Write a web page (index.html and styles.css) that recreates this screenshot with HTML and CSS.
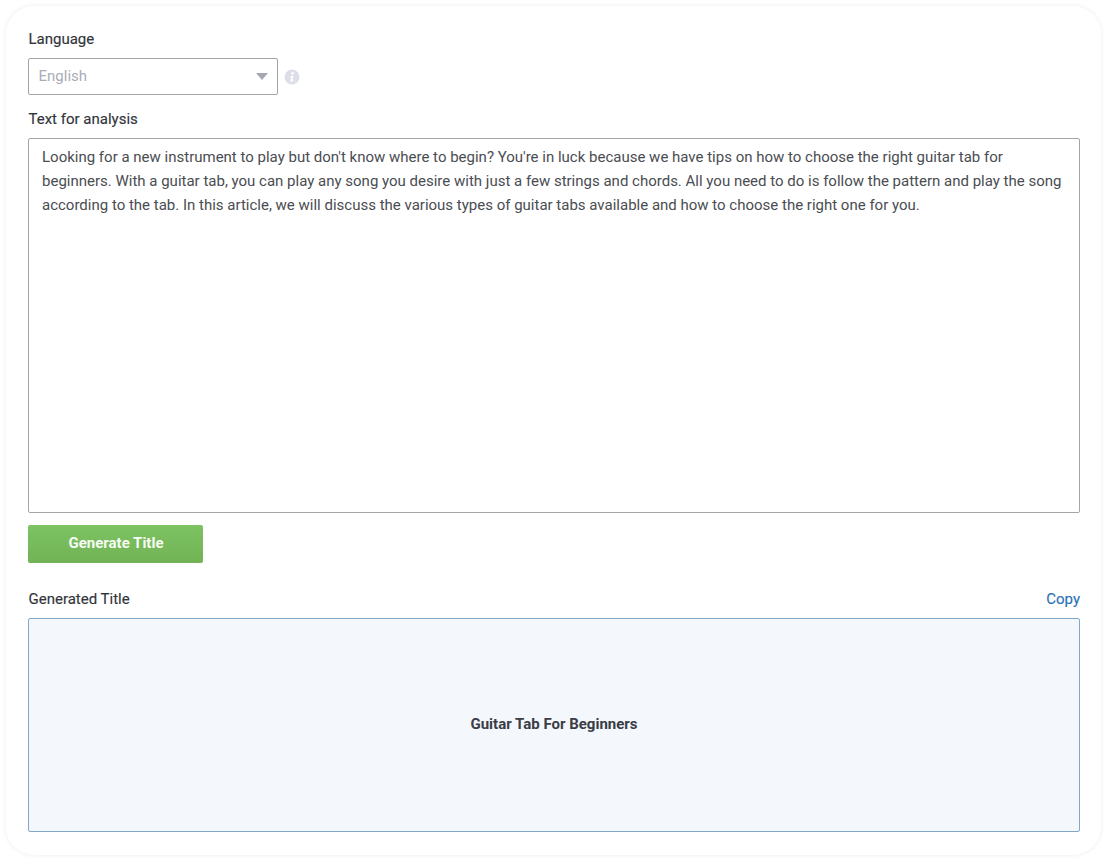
FILE: index.html
```html
<!DOCTYPE html>
<html lang="en">
<head>
<meta charset="utf-8">
<title>Title Generator</title>
<link rel="stylesheet" href="styles.css">
</head>
<body>
<main class="card">
  <label class="label label-first">Language</label>
  <div class="lang-row">
    <div class="select">
      <span class="select-value">English</span>
      <span class="caret"></span>
    </div>
    <svg class="info" viewBox="0 0 16 16" width="16" height="16" aria-hidden="true">
      <circle cx="8" cy="8" r="7.5" fill="#dcdfe8"/>
      <circle cx="8.6" cy="4.4" r="1.3" fill="#fff"/>
      <path d="M6.4 7h3l-1 4.6h1v1H6.2l1-4.6h-1z" fill="#fff"/>
    </svg>
  </div>
  <label class="label label-text">Text for analysis</label>
  <div class="textarea">Looking for a new instrument to play but don't know where to begin? You're in luck because we have tips on how to choose the right guitar tab for beginners. With a guitar tab, you can play any song you desire with just a few strings and chords. All you need to do is follow the pattern and play the song according to the tab. In this article, we will discuss the various types of guitar tabs available and how to choose the right one for you.</div>
  <button class="button" type="button">Generate Title</button>
  <div class="result-head">
    <span class="label">Generated Title</span>
    <a class="copy">Copy</a>
  </div>
  <div class="result">Guitar Tab For Beginners</div>
</main>
</body>
</html>
```
FILE: styles.css
```css
* { box-sizing: border-box; }
html, body { height: 100%; }
body {
  margin: 0;
  padding: 6px;
  background: #fff;
  font-family: Roboto, "Liberation Sans", sans-serif;
  color: #32353b;
}
.card {
  width: 1095px;
  height: 849px;
  padding: 23px 21px 0 22px;
  background: #fff;
  border-radius: 28px;
  box-shadow: 0 0 4px 1px #f1f2f3;
  display: flex;
  flex-direction: column;
}
.label {
  display: block;
  padding-left: 0.5px;
  font-size: 15px;
  line-height: 20px;
  color: #32353b;
  -webkit-text-stroke: 0.15px #32353b;
}
.lang-row {
  display: flex;
  align-items: center;
  gap: 7px;
  margin-top: 9px;
}
.select {
  width: 250px;
  height: 37px;
  border: 1px solid #a3a5a9;
  border-radius: 2px;
  display: flex;
  align-items: center;
  justify-content: space-between;
  padding: 0 9px 0 9.5px;
}
.select-value { padding-bottom: 2px; font-size: 15px; color: #a9adb6; }
.caret {
  width: 0;
  height: 0;
  border-left: 6px solid transparent;
  border-right: 6px solid transparent;
  border-top: 7px solid #a5a8b0;
}
.info { display: block; margin-left: -1px; }
.label-text { margin-top: 14px; }
.textarea {
  margin-top: 9px;
  width: 1052px;
  height: 375px;
  border: 1px solid #a3a5a9;
  border-radius: 2px;
  padding: 6px 13px;
  font-size: 15px;
  line-height: 24px;
  color: #4a4d52;
}
.button {
  margin-top: 12px;
  width: 175px;
  height: 38px;
  border: 0;
  border-radius: 2px;
  background: linear-gradient(#7dc362, #71b356);
  color: #f6fbf3;
  font-family: inherit;
  font-size: 15px;
  font-weight: 700;
  padding: 0 0 2px 1px;
}
.result-head {
  margin-top: 26px;
  width: 1052px;
  display: flex;
  justify-content: space-between;
  align-items: center;
}
.copy { font-size: 15px; line-height: 20px; color: #2a72b5; -webkit-text-stroke: 0.15px #2a72b5; }
.result {
  margin-top: 9px;
  width: 1052px;
  height: 214px;
  border: 1px solid #7fa9c9;
  border-radius: 2px;
  background: #f4f8fc;
  display: flex;
  align-items: center;
  justify-content: center;
  padding-bottom: 2px;
  font-size: 15px;
  font-weight: 700;
  color: #3a3d45;
}
```
